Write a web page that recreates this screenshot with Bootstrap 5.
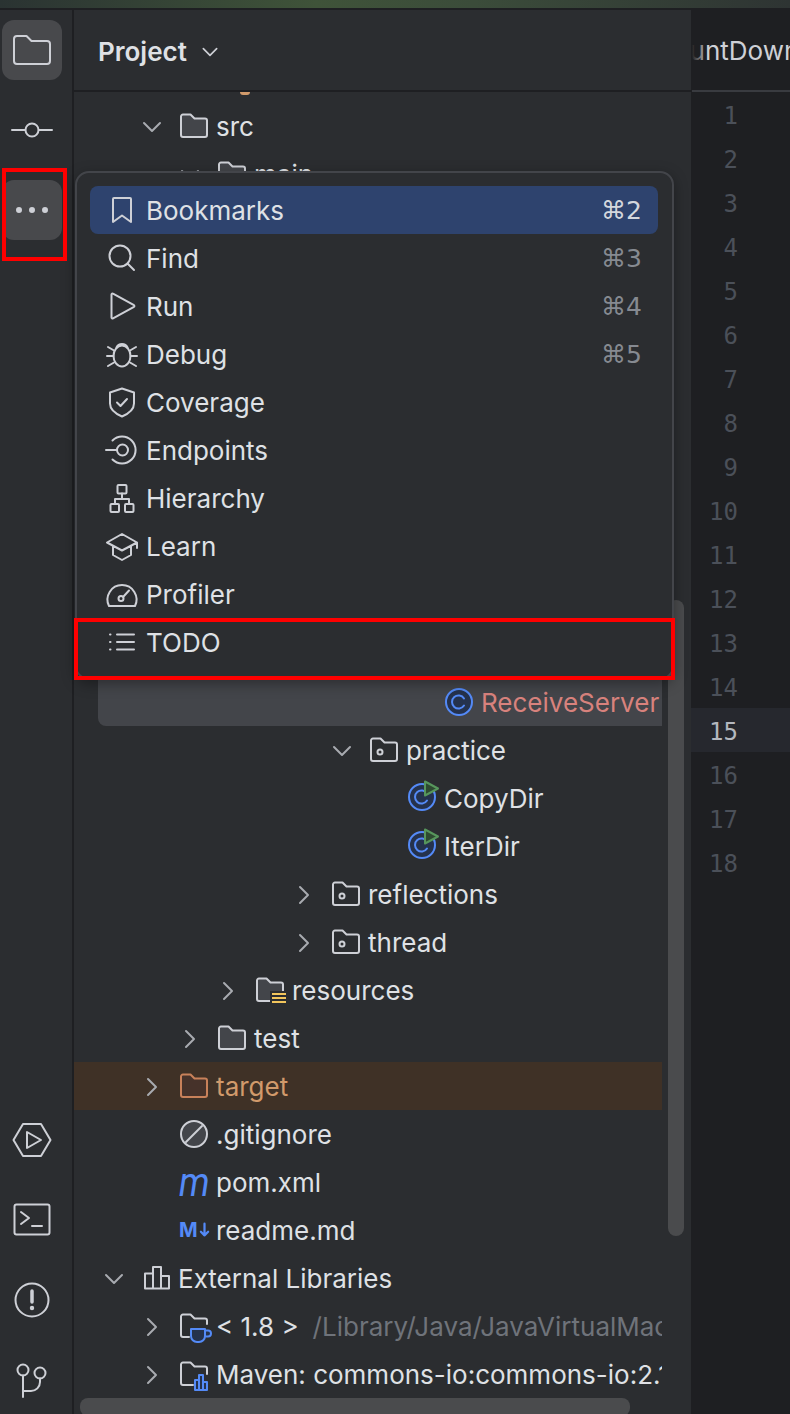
<!DOCTYPE html>
<html lang="en">
<head>
    <meta charset="UTF-8">
    <title>Project tool window</title>
    <link rel="stylesheet" href="https://cdn.jsdelivr.net/npm/bootstrap@5.3.0/dist/css/bootstrap.min.css">
    <style>
        html, body { height: 100%; }
        body {
            margin: 0;
            width: 790px;
            height: 1414px;
            overflow: hidden;
            background: #2b2d30;
            color: #dfe1e5;
            font-family: "Inter", "Liberation Sans", sans-serif;
            font-size: 26px;
            line-height: 1;
        }
        svg { display: block; flex: none; fill: none; stroke: #ced0d6; stroke-width: 2; stroke-linecap: round; stroke-linejoin: round; overflow: visible; }
        .top-strip { height: 10px; border-bottom: 2px solid #1e1f22; background: linear-gradient(90deg, #2a3332 0, #3f5339 40%, #3b4c3a 60%, #2e3433 100%); }
        .ide-main { height: 1404px; }

        .rail { width: 74px; border-right: 2px solid #1e1f22; padding: 10px 0 4px 2px; }
        .rail-btn { width: 60px; height: 60px; border-radius: 12px; }
        .rail-btn.is-on { background: #48494c; }
        .rail-gap { gap: 20px; }

        .project-panel { width: 617px; }
        .panel-head { height: 82px; border-bottom: 2px solid #1e1f22; padding: 4px 0 0 24px; gap: 13px; }
        .panel-title { font-weight: 600; }
        .tree-clip { width: 588px; height: 1322px; overflow: hidden; padding-top: 10px; }
        .tree-row { height: 48px; padding-top: 2px; white-space: nowrap; }
        .tree-gap { height: 480px; }
        .lv-102 { padding-left: 28px; }
        .lv-140 { padding-left: 66px; }
        .lv-178 { padding-left: 104px; }
        .lv-216 { padding-left: 142px; }
        .lv-292 { padding-left: 218px; }
        .lv-330 { padding-left: 256px; }
        .lv-file { padding-left: 106px; }
        .lv-class { padding-left: 334px; }
        .chev-slot { width: 40px; flex: none; }
        .chev-slot svg { stroke: #a8abb0; }
        .node-icon { width: 28px; height: 28px; flex: none; margin: 0 8px 2px 0; position: relative; }
        .icon-over { position: absolute; left: 0; top: 0; }
        .icon-run { position: absolute; left: 0; top: -4px; }
        .node-text-m { color: #548af7; font-family: "Roboto", sans-serif; font-style: italic; font-size: 36px; line-height: 28px; display: block; margin-left: -1px; transform: scaleY(1.15); }
        .node-text-md { color: #548af7; font-weight: 700; font-size: 20px; line-height: 28px; white-space: nowrap; margin-left: -1px; gap: 2px; }
        .md-arrow { stroke: #548af7; stroke-width: 2.5; }
        .row-selected { margin-left: 24px; padding-left: 347px; background: #43454a; border-radius: 0 0 0 8px; color: #d8827d; }
        .row-target { background: #3f3126; color: #d19a6b; }
        .folder-target { stroke: #c8815a; fill: #46322a; }
        .path-hint { color: #6f737a; margin-left: 14px; }

        .folder-fill { fill: #43454a; }
        .cls-ring { stroke: #548af7; fill: #25324d; }
        .cls-c { stroke: #548af7; }
        .run-tag { stroke: #57965c; fill: #2e4a31; }
        .res-knock { stroke: none; fill: #2b2d30; }
        .res-lines { stroke: #f2c55c; stroke-linecap: butt; }
        .blue-mark { stroke: #548af7; fill: #25324d; }

        .orange-tip { position: absolute; left: 166px; top: 82px; width: 10px; height: 3px; background: #d19a6b; border-radius: 0 0 5px 5px; }
        .scroll-v { position: absolute; left: 594px; top: 590px; width: 16px; height: 636px; background: #4a4b4d; border-radius: 8px; }
        .scroll-h { position: absolute; left: 6px; top: 1388px; width: 550px; height: 18px; background: #4a4b4d; border-radius: 8px; }

        .tool-popup {
            position: absolute; left: 75px; top: 171px; width: 599px; height: 509px;
            background: #2b2d30; border: 2px solid #43454a; border-radius: 14px;
            padding: 13px 14px 13px 13px; box-shadow: 0 4px 14px rgba(0, 0, 0, .35); z-index: 5;
        }
        .tool-row { height: 48px; padding: 0 16px; gap: 8px; border-radius: 8px; }
        .tool-row.is-active { background: #2e436e; }
        .tool-row > span { padding-top: 2px; }
        .tool-row > span.tool-key { margin-left: auto; padding-top: 0; color: #868a91; font-family: "DejaVu Sans", "Inter", sans-serif; font-size: 25px; }
        .tool-row.is-active > span.tool-key { color: #d4d7dd; }

        .editor-col { width: 99px; background: #1e1f22; }
        .tab-head { height: 82px; border-bottom: 2px solid #393b40; margin-left: 1px; overflow: hidden; position: relative; padding-top: 2px; white-space: nowrap; color: #ced0d6; }
        .tab-head span { margin-left: -37px; }
        .tab-head::before { content: ""; position: absolute; left: 0; top: 0; bottom: 0; width: 16px; background: linear-gradient(90deg, #1e1f22, rgba(30, 31, 34, 0)); }
        .gutter-num { height: 44px; width: 47px; padding-top: 4px; text-align: right; color: #4b5059; font-family: "DejaVu Sans Mono", monospace; font-size: 24px; }
        .gutter-line.is-current { background: #26282e; }
        .is-current .gutter-num { color: #b4b8bf; }

        .mark-box { position: absolute; border: 4px solid #ff0000; z-index: 9; }
        .mark-rail { left: 2px; top: 168px; width: 65px; height: 93px; }
        .mark-todo { left: 74px; top: 618px; width: 601px; height: 62px; }
    </style>
</head>
<body>
    <svg width="0" height="0" class="position-absolute">
        <symbol id="chev-down" viewBox="0 0 24 24"><path d="M4 8l8 8 8-8"/></symbol>
        <symbol id="chev-right" viewBox="0 0 24 24"><path d="M8 4l8 8-8 8"/></symbol>
        <symbol id="folder" viewBox="0 0 28 28"><path d="M3 2.5h7.500l4 4H25a2 2 0 0 1 2 2V23a2 2 0 0 1-2 2H3a2 2 0 0 1-2-2V4.500a2 2 0 0 1 2-2z"/></symbol>
        <symbol id="pkg" viewBox="0 0 28 28"><path d="M3 2.500h7.500l4 4H25a2 2 0 0 1 2 2V23a2 2 0 0 1-2 2H3a2 2 0 0 1-2-2V4.500a2 2 0 0 1 2-2z"/><circle cx="10" cy="16" r="2.500"/></symbol>
    </svg>

    <div class="top-strip"></div>
    <div class="d-flex ide-main">
        <div class="rail d-flex flex-column justify-content-between flex-none">
            <div class="d-flex flex-column rail-gap">
                <div class="rail-btn is-on d-flex align-items-center justify-content-center">
                    <svg width="40" height="40" viewBox="0 0 40 40" stroke-width="2.5"><path d="M5 6h9.500l5 5H35a3 3 0 0 1 3 3v17a3 3 0 0 1-3 3H5a3 3 0 0 1-3-3V9a3 3 0 0 1 3-3z"/></svg>
                </div>
                <div class="rail-btn d-flex align-items-center justify-content-center">
                    <svg width="40" height="40" viewBox="0 0 40 40" stroke-width="2.5"><circle cx="20" cy="20" r="6.500"/><path d="M0 20h13M27 20h13"/></svg>
                </div>
                <div class="rail-btn is-on d-flex align-items-center justify-content-center">
                    <svg width="40" height="40" viewBox="0 0 40 40"><circle cx="7" cy="20" r="2" fill="#ced0d6"/><circle cx="20" cy="20" r="2" fill="#ced0d6"/><circle cx="33" cy="20" r="2" fill="#ced0d6"/></svg>
                </div>
            </div>
            <div class="d-flex flex-column rail-gap">
                <div class="rail-btn d-flex align-items-center justify-content-center">
                    <svg width="40" height="40" viewBox="0 0 40 40" stroke-width="2.5"><path d="M11 4h18l9.500 16L29 36H11L1.500 20z"/><path d="M15 12v16l14-8z"/></svg>
                </div>
                <div class="rail-btn d-flex align-items-center justify-content-center">
                    <svg width="40" height="40" viewBox="0 0 40 40" stroke-width="2.5"><rect x="2.500" y="4.500" width="35" height="30" rx="2"/><path d="M9 12l8 6-8 6M20 26h10"/></svg>
                </div>
                <div class="rail-btn d-flex align-items-center justify-content-center">
                    <svg width="40" height="40" viewBox="0 0 40 40" stroke-width="2.5"><circle cx="20" cy="20" r="16.500"/><path d="M20 11v11" stroke-width="3.500"/><circle cx="20" cy="28" r="1.200" fill="#ced0d6"/></svg>
                </div>
                <div class="rail-btn d-flex align-items-center justify-content-center">
                    <svg width="40" height="40" viewBox="0 0 40 40" stroke-width="2.500"><circle cx="11" cy="10" r="5.500"/><circle cx="28" cy="13" r="5.500"/><path d="M11 15.500v21.500M11 31h8a9 9 0 0 0 9-9v-3.500"/></svg>
                </div>
            </div>
        </div>

        <div class="project-panel position-relative flex-none">
            <div class="panel-head d-flex align-items-center">
                <span class="panel-title">Project</span>
                <svg width="20" height="20"><use href="#chev-down"/></svg>
            </div>
            <div class="orange-tip"></div>
            <div class="tree-clip">
                <div class="tree-row d-flex align-items-center lv-140"><div class="chev-slot"><svg width="24" height="24"><use href="#chev-down"/></svg></div><div class="node-icon"><svg width="28" height="28" class="folder-fill"><use href="#folder"/></svg></div>src</div>
                <div class="tree-row d-flex align-items-center lv-178"><div class="chev-slot"><svg width="24" height="24"><use href="#chev-down"/></svg></div><div class="node-icon"><svg width="28" height="28" class="folder-fill"><use href="#folder"/></svg></div>main</div>
                <div class="tree-gap"></div>
                <div class="tree-row d-flex align-items-center row-selected"><div class="node-icon"><svg width="28" height="28" class="cls-ring"><circle cx="14" cy="14" r="13"/><path class="cls-c" d="M19 10.500a6.500 6.500 0 1 0 0 7" fill="none"/></svg></div>ReceiveServer</div>
                <div class="tree-row d-flex align-items-center lv-330"><div class="chev-slot"><svg width="24" height="24"><use href="#chev-down"/></svg></div><div class="node-icon"><svg width="28" height="28"><use href="#pkg"/></svg></div>practice</div>
                <div class="tree-row d-flex align-items-center lv-class"><div class="node-icon"><svg width="32" height="32" class="icon-run cls-ring"><circle cx="14" cy="17" r="13"/><path class="cls-c" d="M19 13.500a6.500 6.500 0 1 0 0 7" fill="none"/><path class="run-tag" d="M17 1.500l13 7-13 7z"/></svg></div>CopyDir</div>
                <div class="tree-row d-flex align-items-center lv-class"><div class="node-icon"><svg width="32" height="32" class="icon-run cls-ring"><circle cx="14" cy="17" r="13"/><path class="cls-c" d="M19 13.500a6.500 6.500 0 1 0 0 7" fill="none"/><path class="run-tag" d="M17 1.500l13 7-13 7z"/></svg></div>IterDir</div>
                <div class="tree-row d-flex align-items-center lv-292"><div class="chev-slot"><svg width="24" height="24"><use href="#chev-right"/></svg></div><div class="node-icon"><svg width="28" height="28"><use href="#pkg"/></svg></div>reflections</div>
                <div class="tree-row d-flex align-items-center lv-292"><div class="chev-slot"><svg width="24" height="24"><use href="#chev-right"/></svg></div><div class="node-icon"><svg width="28" height="28"><use href="#pkg"/></svg></div>thread</div>
                <div class="tree-row d-flex align-items-center lv-216"><div class="chev-slot"><svg width="24" height="24"><use href="#chev-right"/></svg></div><div class="node-icon"><svg width="28" height="28" class="folder-fill"><use href="#folder"/><rect class="res-knock" x="14" y="15" width="16" height="14"/><path class="res-lines" d="M16 18h14M16 22h14M16 26h14"/></svg></div>resources</div>
                <div class="tree-row d-flex align-items-center lv-178"><div class="chev-slot"><svg width="24" height="24"><use href="#chev-right"/></svg></div><div class="node-icon"><svg width="28" height="28" class="folder-fill"><use href="#folder"/></svg></div>test</div>
                <div class="tree-row d-flex align-items-center lv-140 row-target"><div class="chev-slot"><svg width="24" height="24"><use href="#chev-right"/></svg></div><div class="node-icon"><svg width="28" height="28" class="folder-target"><use href="#folder"/></svg></div>target</div>
                <div class="tree-row d-flex align-items-center lv-file"><div class="node-icon"><svg width="28" height="28" class="folder-fill"><circle cx="14" cy="14" r="13"/><path d="M6 22L22 6"/></svg></div>.gitignore</div>
                <div class="tree-row d-flex align-items-center lv-file"><div class="node-icon"><span class="node-text-m">m</span></div>pom.xml</div>
                <div class="tree-row d-flex align-items-center lv-file"><div class="node-icon"><span class="node-text-md d-flex align-items-center">M<svg class="md-arrow" width="9" height="16" viewBox="0 0 10 16"><path d="M5 1v13M1 10l4 4 4-4"/></svg></span></div>readme.md</div>
                <div class="tree-row d-flex align-items-center lv-102"><div class="chev-slot"><svg width="24" height="24"><use href="#chev-down"/></svg></div><div class="node-icon"><svg width="28" height="28"><path d="M3 9.500h8v15H3zM11 3h8v21.500h-8zM19 12h8v12.500h-8z"/></svg></div>External Libraries</div>
                <div class="tree-row d-flex align-items-center lv-140"><div class="chev-slot"><svg width="24" height="24"><use href="#chev-right"/></svg></div><div class="node-icon"><svg width="32" height="32" class="icon-over"><path d="M9 25H3a2 2 0 0 1-2-2V4.500a2 2 0 0 1 2-2h7.500l4 4H25a2 2 0 0 1 2 2V12"/><path class="blue-mark" d="M11 17h14v7a6 6 0 0 1-6 6h-2a6 6 0 0 1-6-6zM25 18.500h3a2.500 2.500 0 0 1 0 6h-3"/></svg></div>&lt; 1.8 &gt;<span class="path-hint">/Library/Java/JavaVirtualMachines</span></div>
                <div class="tree-row d-flex align-items-center lv-140"><div class="chev-slot"><svg width="24" height="24"><use href="#chev-right"/></svg></div><div class="node-icon"><svg width="32" height="32" class="icon-over"><path d="M13 25H3a2 2 0 0 1-2-2V4.500a2 2 0 0 1 2-2h7.500l4 4H25a2 2 0 0 1 2 2V14"/><path class="blue-mark" d="M15 20h4v10h-4zM19 15h4v15h-4zM23 22h4v8h-4z"/></svg></div>Maven: commons-io:commons-io:2.11.0</div>
            </div>
            <div class="scroll-v"></div>
            <div class="scroll-h"></div>
        </div>

        <div class="editor-col flex-none">
            <div class="tab-head d-flex align-items-center"><span>CountDownLatch</span></div>
            <div id="gutter"></div>
        </div>
    </div>

    <div class="tool-popup">
        <div class="tool-row is-active d-flex align-items-center">
            <svg width="32" height="32" viewBox="0 0 32 32"><path d="M8 4h16a1 1 0 0 1 1 1v23l-9-6.500L7 28V5a1 1 0 0 1 1-1z"/></svg>
            <span>Bookmarks</span><span class="tool-key">⌘2</span>
        </div>
        <div class="tool-row d-flex align-items-center">
            <svg width="32" height="32" viewBox="0 0 32 32"><circle cx="14" cy="14" r="10.500"/><path d="M21.500 21.500L28 28"/></svg>
            <span>Find</span><span class="tool-key">⌘3</span>
        </div>
        <div class="tool-row d-flex align-items-center">
            <svg width="32" height="32" viewBox="0 0 32 32"><path d="M5.500 4.500v23a1 1 0 0 0 1.500.8l21-11.500a1 1 0 0 0 0-1.600L7 3.700a1 1 0 0 0-1.500.8z"/></svg>
            <span>Run</span><span class="tool-key">⌘4</span>
        </div>
        <div class="tool-row d-flex align-items-center">
            <svg width="32" height="32" viewBox="0 0 32 32"><ellipse cx="16" cy="18" rx="8.500" ry="10.500"/><path d="M10.500 9.500a6 6 0 0 1 11 0M1 18h6.500M24.500 18H31M2 9l6 3.500M30 9l-6 3.500M2 28l6-3.500M30 28l-6-3.500"/></svg>
            <span>Debug</span><span class="tool-key">⌘5</span>
        </div>
        <div class="tool-row d-flex align-items-center">
            <svg width="32" height="32" viewBox="0 0 32 32"><path d="M16 2.500l12 4v11c0 6-5 10-12 13-7-3-12-7-12-13v-11z"/><path d="M11 16.500l3.500 3.500 6.500-7"/></svg>
            <span>Coverage</span>
        </div>
        <div class="tool-row d-flex align-items-center">
            <svg width="32" height="32" viewBox="0 0 32 32"><path d="M0 16h11"/><circle cx="16.500" cy="16" r="5.500"/><path d="M6.500 6.500a13.500 13.500 0 1 1 0 19"/></svg>
            <span>Endpoints</span>
        </div>
        <div class="tool-row d-flex align-items-center">
            <svg width="32" height="32" viewBox="0 0 32 32"><rect x="11.500" y="3" width="9" height="8.500" rx="1"/><rect x="4.500" y="22" width="8.500" height="8" rx="1"/><rect x="19" y="22" width="8.500" height="8" rx="1"/><path d="M16 11.500V17M9 22v-5h14v5"/></svg>
            <span>Hierarchy</span>
        </div>
        <div class="tool-row d-flex align-items-center">
            <svg width="32" height="32" viewBox="0 0 32 32"><path d="M16 4L31 12.500 16 20.500 1 12.500zM7 16.500V25l9 5 9-5v-8.500M31 12.500V18"/></svg>
            <span>Learn</span>
        </div>
        <div class="tool-row d-flex align-items-center">
            <svg width="32" height="32" viewBox="0 0 32 32"><path d="M3 28a14.500 14.500 0 1 1 26 0zM17.500 18.500L23 12.500"/><circle cx="15" cy="20.500" r="2.500"/></svg>
            <span>Profiler</span>
        </div>
        <div class="tool-row d-flex align-items-center">
            <svg width="32" height="32" viewBox="0 0 32 32"><path d="M11 8.500h17M11 16h17M11 23.500h17M4 8.500h.5M4 16h.5M4 23.500h.5"/></svg>
            <span>TODO</span>
        </div>
    </div>

    <div class="mark-box mark-rail"></div>
    <div class="mark-box mark-todo"></div>

    <script>
        const gutter = document.getElementById('gutter');
        for (let i = 1; i <= 18; i++) {
            const line = document.createElement('div');
            line.className = 'gutter-line' + (i === 15 ? ' is-current' : '');
            const num = document.createElement('div');
            num.className = 'gutter-num d-flex align-items-center justify-content-end';
            num.textContent = i;
            line.appendChild(num);
            gutter.appendChild(line);
        }
    </script>
    <script src="https://cdn.jsdelivr.net/npm/bootstrap@5.3.0/dist/js/bootstrap.bundle.min.js"></script>
</body>
</html>
